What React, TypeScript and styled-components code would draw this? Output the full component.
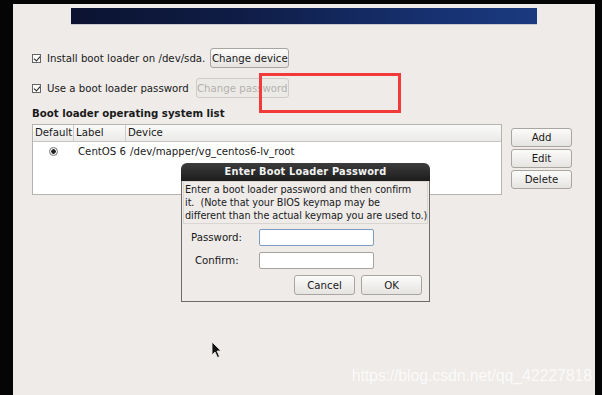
import styled, { createGlobalStyle } from "styled-components";

const GlobalStyle = createGlobalStyle`
html, body {
  margin: 0;
  padding: 0;
  background: #050505;
}
* {
  box-sizing: border-box;
}
`

const UI_FONT = `"DejaVu Sans", "Liberation Sans", sans-serif`;

function App() {
  return (
    <Screen>
      <GlobalStyle />
      <Window>
        <Banner />

        <Content>
          <OptionRow>
            <Check checked />
            <OptionText>Install boot loader on /dev/sda.</OptionText>
            <Button $w={79}>Change device</Button>
          </OptionRow>
          <OptionRow>
            <Check checked />
            <OptionText>Use a boot loader password</OptionText>
            <Button disabled $gap={7} $w={93}>Change password</Button>
          </OptionRow>

          <SectionTitle>Boot loader operating system list</SectionTitle>

          <ListArea>
            <Table>
              <HeadRow>
                <HeadCell $w={41}>Default</HeadCell>
                <HeadCell $w={52}>Label</HeadCell>
                <HeadCell $last>Device</HeadCell>
              </HeadRow>
              <BodyRow>
                <Cell $w={41} $center>
                  <Radio />
                </Cell>
                <Cell $w={52}>CentOS 6</Cell>
                <Cell>/dev/mapper/vg_centos6-lv_root</Cell>
              </BodyRow>
            </Table>
            <SideButtons>
              <SideButton>Add</SideButton>
              <SideButton>Edit</SideButton>
              <SideButton>Delete</SideButton>
            </SideButtons>
          </ListArea>
        </Content>

        {/* annotation drawn over the screenshot */}
        <Highlight />

        <Dialog>
          <DialogTitle>Enter Boot Loader Password</DialogTitle>
          <DialogBody>
            <DialogText>
              Enter a boot loader password and then confirm<br />
              it.&nbsp; (Note that your BIOS keymap may be<br />
              different than the actual keymap you are used to.)
            </DialogText>
            <FieldGrid>
              <FieldLabel>Password:</FieldLabel>
              <Field $focused />
              <FieldLabel $indent>Confirm:</FieldLabel>
              <Field />
            </FieldGrid>
            <DialogActions>
              <DialogButton>Cancel</DialogButton>
              <DialogButton>OK</DialogButton>
            </DialogActions>
          </DialogBody>
        </Dialog>

        <Pointer viewBox="0 0 12 18" width="12" height="18">
          <path d="M1 1 L1 14 L4 11 L6.5 16.5 L8.5 15.5 L6 10 L10 10 Z" fill="#111" stroke="#eee" strokeWidth="0.8" />
        </Pointer>

        <Watermark>https://blog.csdn.net/qq_42227818</Watermark>
      </Window>
    </Screen>
  )
}

const Screen = styled.div`
display: flex;
width: 602px;
height: 395px;
padding: 4px 7px 0 13px;
background: #050505;
font-family: ${UI_FONT};
font-size: 10.2px;
color: #1a1a1a;
`

const Window = styled.div`
position: relative;
flex: 1;
display: flex;
flex-direction: column;
background: #eeebe9;
overflow: hidden;
`

const Banner = styled.div`
margin: 4px 0 0 58px;
width: 466px;
height: 17px;
background: linear-gradient(90deg, #0b1330 0%, #0f1c45 35%, #16306e 75%, #1a3a80 100%);
border-bottom: 1px solid #c9c9d0;
`

const Content = styled.div`
display: flex;
flex-direction: column;
padding: 23px 0 0 19px;
`

const OptionRow = styled.div`
display: flex;
align-items: center;
height: 20px;
margin-bottom: 10px;
`

const Check = styled.span<{ checked?: boolean }>`
position: relative;
width: 9px;
height: 9px;
margin-right: 6px;
border: 1px solid #666;
background: #fafafa;

&::after {
  content: "";
  display: ${(p) => (p.checked ? "block" : "none")};
  position: absolute;
  left: 2px;
  top: 0px;
  width: 3px;
  height: 5px;
  border: solid #222;
  border-width: 0 1.5px 1.5px 0;
  transform: rotate(40deg);
}
`

const OptionText = styled.span`
white-space: nowrap;
`

const Button = styled.button<{ $gap?: number; $w: number }>`
margin-left: ${(p) => p.$gap ?? 5}px;
width: ${(p) => p.$w}px;
height: 20px;
padding: 0;
font-family: ${UI_FONT};
font-size: 10.2px;
white-space: nowrap;
color: #1a1a1a;
background: linear-gradient(#fbfbfa, #e6e4e1);
border: 1px solid #a9a6a2;
border-radius: 3px;

&:disabled {
  color: #b4b1ad;
  background: #eceae7;
  border-color: #cfccc8;
}
`

const SectionTitle = styled.div`
font-weight: bold;
margin-top: -1px;
height: 14px;
line-height: 14px;
`

const ListArea = styled.div`
display: flex;
align-items: flex-start;
margin-top: 3px;
`

const Table = styled.div`
width: 470px;
height: 71px;
background: #fff;
border: 1px solid #b7b4b0;
`

const HeadRow = styled.div`
display: flex;
height: 17px;
background: linear-gradient(#fafafa, #ebeae8);
border-bottom: 1px solid #c8c5c1;
`

const HeadCell = styled.div<{ $w?: number; $last?: boolean }>`
width: ${(p) => (p.$w ? `${p.$w}px` : "auto")};
flex: ${(p) => (p.$last ? 1 : "none")};
padding-left: 2px;
line-height: 16px;
border-right: ${(p) => (p.$last ? "none" : "1px solid #cfccc8")};
`

const BodyRow = styled.div`
display: flex;
height: 19px;
align-items: center;
`

const Cell = styled.div<{ $w?: number; $center?: boolean }>`
width: ${(p) => (p.$w ? `${p.$w}px` : "auto")};
display: flex;
justify-content: ${(p) => (p.$center ? "center" : "flex-start")};
padding-left: ${(p) => (p.$center ? 0 : 4)}px;
white-space: nowrap;
`

const Radio = styled.span`
width: 9px;
height: 9px;
border-radius: 50%;
border: 1px solid #777;
background: radial-gradient(circle, #222 0 2px, #f4f4f4 2.5px);
`

const SideButtons = styled.div`
display: flex;
flex-direction: column;
gap: 2px;
margin: 4px 0 0 9px;
`

const SideButton = styled.button`
width: 61px;
height: 19px;
font-family: ${UI_FONT};
font-size: 10.2px;
color: #1a1a1a;
background: linear-gradient(#fbfbfa, #e6e4e1);
border: 1px solid #a9a6a2;
border-radius: 3px;
`

const Highlight = styled.div`
position: absolute;
left: 246px;
top: 69px;
width: 142px;
height: 40px;
border: 3px solid #f23a3a;
`

const Dialog = styled.div`
position: absolute;
left: 168px;
top: 159px;
width: 249px;
display: flex;
flex-direction: column;
`

const DialogTitle = styled.div`
height: 18px;
line-height: 18px;
text-align: center;
font-weight: bold;
font-size: 9.8px;
color: #f2f2f2;
background: linear-gradient(#3c3c3c, #1c1c1c);
border-radius: 6px 6px 0 0;
letter-spacing: 0.2px;
`

const DialogBody = styled.div`
display: flex;
flex-direction: column;
background: #eeebe9;
border: 1px solid #6d6b69;
border-top: none;
padding: 0 1px 6px 1px;
`

const DialogText = styled.div`
font-size: 9.7px;
letter-spacing: -0.06px;
line-height: 13px;
white-space: nowrap;
padding: 1px 0 1px 1px;
border: 1px solid #d8d5d2;
`

const FieldGrid = styled.div`
display: grid;
grid-template-columns: 68px 115px;
row-gap: 6px;
align-items: center;
margin: 5px 0 0 8px;
`

const FieldLabel = styled.span<{ $indent?: boolean }>`
padding-left: ${(p) => (p.$indent ? 4 : 0)}px;
`

const Field = styled.div<{ $focused?: boolean }>`
height: 17px;
background: #fff;
border: 1px solid ${(p) => (p.$focused ? "#7d9cc4" : "#a6a29e")};
border-radius: 2px;
`

const DialogActions = styled.div`
display: flex;
justify-content: flex-end;
gap: 6px;
margin: 6px 6px 0 0;
`

const DialogButton = styled.button`
width: 61px;
height: 20px;
font-family: ${UI_FONT};
font-size: 10.2px;
color: #1a1a1a;
background: linear-gradient(#fbfbfa, #e6e4e1);
border: 1px solid #a9a6a2;
border-radius: 3px;
`

const Pointer = styled.svg`
position: absolute;
left: 198px;
top: 337px;
`

const Watermark = styled.div`
position: absolute;
right: 3px;
bottom: 10px;
font-family: "Liberation Sans", Arial, sans-serif;
font-size: 16.1px;
color: rgba(255, 255, 255, 0.75);
letter-spacing: -0.2px;
`

export default App;
